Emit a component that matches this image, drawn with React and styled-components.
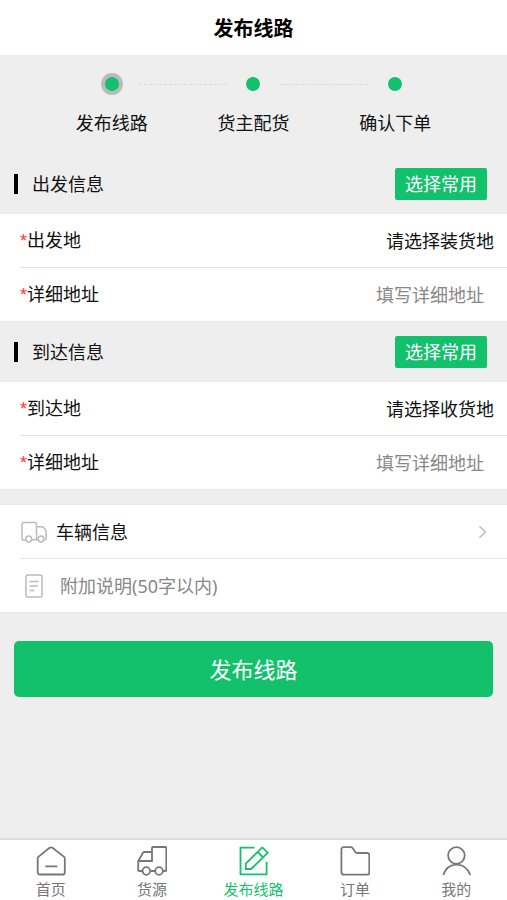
import React from "react";
import styled, { createGlobalStyle } from "styled-components";

const steps = ["发布线路", "货主配货", "确认下单"];

const sections = [
  { id: "from", title: "出发信息", place: "出发地", pick: "请选择装货地" },
  { id: "to", title: "到达信息", place: "到达地", pick: "请选择收货地" },
];

const tabs = [
  { name: "首页", Icon: HomeIcon },
  { name: "货源", Icon: GoodsIcon },
  { name: "发布线路", Icon: EditIcon, active: true },
  { name: "订单", Icon: FolderIcon },
  { name: "我的", Icon: UserIcon },
];

export default function App() {
  return (
    <PageStyled>
      <GlobalStyle />
      <Header>
        <h1>发布线路</h1>
      </Header>
      <Main>
        <Steps>
          {steps.map((label, i) => (
            <Step key={label}>
              <Dot $col={i * 2 + 1} $current={i === 0} />
              {i < steps.length - 1 && <Connector $col={i * 2 + 2} />}
              <StepLabel $col={i * 2 + 1}>{label}</StepLabel>
            </Step>
          ))}
        </Steps>

        {sections.map((s) => (
          <section key={s.id}>
            <SectionHead>
              <h2>{s.title}</h2>
              <SmallButton type="button">选择常用</SmallButton>
            </SectionHead>
            <Group>
              <Row>
                <Label id={s.id + "-place"}>
                  <span>*</span>
                  {s.place}
                </Label>
                <PickButton type="button" aria-describedby={s.id + "-place"}>
                  {s.pick}
                </PickButton>
              </Row>
              <Row>
                <Label as="label" htmlFor={s.id + "-address"}>
                  <span>*</span>
                  详细地址
                </Label>
                <TextInput id={s.id + "-address"} $right placeholder="填写详细地址" />
              </Row>
            </Group>
          </section>
        ))}

        <ExtraGroup>
          <Row>
            <CarButton type="button">
              <TruckIcon />
              车辆信息
              <ChevronIcon />
            </CarButton>
          </Row>
          <Row>
            <NoteLabel htmlFor="note">
              <NoteIcon />
            </NoteLabel>
            <TextInput
              id="note"
              aria-label="附加说明"
              maxLength={50}
              placeholder="附加说明(50字以内)"
            />
          </Row>
        </ExtraGroup>

        <SubmitButton type="button">发布线路</SubmitButton>
      </Main>
      <TabBar>
        {tabs.map(({ name, Icon, active }) => (
          <Tab key={name} href="#" $active={active}>
            <Icon />
            {name}
          </Tab>
        ))}
      </TabBar>
    </PageStyled>
  );
}

function HomeIcon() {
  return (
    <TabIcon viewBox="0 0 30 30">
      <path d="M13.6 1.8a2.4 2.4 0 0 1 2.8 0L27.8 10.6a2.4 2.4 0 0 1 1 1.9V26.5a2 2 0 0 1-2 2H3.700a2 2 0 0 1-2-2V12.500a2.400 2.400 0 0 1 1-1.900zM9.300 20.300h12" />
    </TabIcon>
  );
}

function GoodsIcon() {
  return (
    <TabIcon viewBox="0 0 30 30">
      <path d="M5.300 25H2.200a1 1 0 0 1-1-1V15L6 6.800a1.500 1.500 0 0 1 1.300-.8H15M1.200 15H15V2a1 1 0 0 1 1-1h12.300a1 1 0 0 1 1 1v22a1 1 0 0 1-1 1H26M13.300 25H18" />
      <circle cx="9.300" cy="25" r="3.800" />
      <circle cx="22" cy="25" r="3.800" />
    </TabIcon>
  );
}

function EditIcon() {
  return (
    <TabIcon viewBox="0 0 30 30">
      <path d="M15.500 1.700H1.500V28.300H27.600V15.700" />
      <path d="M6.800 17.700L23.300 1.400L28.700 6.700L12.200 23H6.800zM18.800 6L24.100 11.300" />
    </TabIcon>
  );
}

function FolderIcon() {
  return (
    <TabIcon viewBox="0 0 30 30">
      <path d="M3.400 1.200H11a2 2 0 0 1 1.600.8L15.500 6.200a2 2 0 0 0 1.600.8H27.300a2 2 0 0 1 2 2V26.600a2 2 0 0 1-2 2H3.400a2 2 0 0 1-2-2V3.200a2 2 0 0 1 2-2z" />
    </TabIcon>
  );
}

function UserIcon() {
  return (
    <TabIcon viewBox="0 0 30 30">
      <circle cx="15.400" cy="9.500" r="8.300" />
      <path d="M2.300 29C4.500 22.500 9.500 18.600 15.600 18.600S26.900 22.500 29.200 29" />
    </TabIcon>
  );
}

function TruckIcon() {
  return (
    <RowIcon width="26" height="22" viewBox="0 0 26 22">
      <path d="M4.500 19.300H2.500a1.500 1.500 0 0 1-1.500-1.500V3a1.500 1.500 0 0 1 1.500-1.500H14a1.500 1.500 0 0 1 1.500 1.500V18.500M10.800 18.700H17M15.500 5.800H20.500c2.800 0 4.700 3.200 4.700 6.500V17.500a1.500 1.500 0 0 1-1.500 1.500" />
      <circle cx="7.700" cy="18" r="2.900" />
      <circle cx="20" cy="18" r="2.900" />
    </RowIcon>
  );
}

function NoteIcon() {
  return (
    <RowIcon width="18" height="24" viewBox="0 0 18 24">
      <rect x="1" y="1" width="16" height="22" rx="1.500" />
      <path d="M4.500 7.500H13.500M4.500 12H13M4.500 16.500H9.500" />
    </RowIcon>
  );
}

function ChevronIcon() {
  return (
    <RowIcon width="9" height="14" viewBox="0 0 9 14">
      <path d="M1.500 1.500L7.500 7L1.500 12.500" />
    </RowIcon>
  );
}

const GlobalStyle = createGlobalStyle`
  * {
    box-sizing: border-box;
  }

  body {
    margin: 0;
    background: #eee;
  }

  body, button, input {
    font-family: "Noto Sans", "Noto Sans CJK SC", sans-serif;
    font-size: 18px;
    line-height: 24px;
    color: #111;
  }

  button, input {
    border: 0;
    padding: 0;
    background: none;
  }

  button {
    cursor: pointer;
  }
`;

const PageStyled = styled.div`
  min-height: 100vh;
  display: flex;
  flex-direction: column;
`;

const Header = styled.header`
  height: 55px;
  padding-top: 2px;
  display: flex;
  align-items: center;
  justify-content: center;
  background: #fff;

  h1 {
    margin: 0;
    font-size: 20px;
    color: #000;
  }
`;

const Main = styled.main`
  flex: 1;
`;

/* two grid columns per step, so that a connector can span from one dot to the next */
const Steps = styled.ol`
  display: grid;
  grid-template-columns: repeat(6, 1fr);
  grid-template-rows: 22px 24px;
  row-gap: 16px;
  align-items: center;
  margin: 0;
  padding: 18px 41px;
  list-style: none;
`;

const Step = styled.li`
  display: contents;
`;

const Dot = styled.span`
  grid-row: 1;
  grid-column: ${(p) => p.$col} / span 2;
  justify-self: center;
  width: 14px;
  height: 14px;
  border-radius: 50%;
  background: #13c16c;
  box-shadow: ${(p) => (p.$current ? "0 0 0 4px #bbb" : "none")};
`;

const Connector = styled.span`
  grid-row: 1;
  grid-column: ${(p) => p.$col} / span 2;
  margin: 0 27px;
  border-top: 1px dashed #dcdcdc;
`;

const StepLabel = styled.span`
  grid-row: 2;
  grid-column: ${(p) => p.$col} / span 2;
  text-align: center;
`;

const SectionHead = styled.div`
  height: 61px;
  padding: 0 20px 0 14px;
  display: flex;
  align-items: center;
  justify-content: space-between;

  h2 {
    margin: 0;
    padding-left: 14px;
    border-left: 4px solid #000;
    font-size: 18px;
    font-weight: 400;
    line-height: 20px;
  }
`;

const SmallButton = styled.button`
  height: 32px;
  padding: 0 10px;
  border-radius: 2px;
  background: #13c16c;
  color: #fff;
`;

const Group = styled.div`
  padding-left: 20px;
  background: #fff;
  box-shadow: 0 0 0 1px #e8e8e8;
`;

const ExtraGroup = styled(Group)`
  margin-top: 16px;
`;

const Row = styled.div`
  display: flex;
  align-items: center;
  height: 53px;

  & + & {
    height: 54px;
    border-top: 1px solid #e4e4e4;
  }
`;

const Label = styled.span`
  flex: none;

  span {
    color: #f33;
    font-family: "Liberation Sans", sans-serif;
  }
`;

const PickButton = styled.button`
  flex: 1;
  padding-right: 13px;
  text-align: right;
`;

const TextInput = styled.input`
  flex: 1;
  min-width: 0;
  height: 100%;
  padding-right: 23px;
  text-align: ${(p) => (p.$right ? "right" : "left")};
  outline: none;

  &::placeholder {
    color: #888;
    opacity: 1;
  }
`;

const CarButton = styled.button`
  flex: 1;
  height: 100%;
  padding: 0 20px 0 1px;
  display: flex;
  align-items: center;
  gap: 9px;

  svg:last-child {
    margin-left: auto;
  }
`;

const NoteLabel = styled.label`
  display: flex;
  width: 40px;
  padding-left: 5px;
`;

const RowIcon = styled.svg`
  flex: none;
  fill: none;
  stroke: #bbb;
  stroke-width: 1.5;
`;

const SubmitButton = styled.button`
  display: block;
  width: calc(100% - 28px);
  height: 56px;
  margin: 29px 14px;
  border-radius: 5px;
  background: #13c16c;
  color: #fff;
  font-size: 22px;
`;

const TabBar = styled.nav`
  position: sticky;
  bottom: 0;
  display: flex;
  height: 62px;
  border-top: 2px solid #ddd;
  background: #fff;
`;

const Tab = styled.a`
  flex: 1;
  display: flex;
  flex-direction: column;
  align-items: center;
  gap: 3px;
  padding-top: 6px;
  font-size: 15px;
  line-height: 20px;
  text-decoration: none;
  color: ${(p) => (p.$active ? "#13c16c" : "#777")};
`;

const TabIcon = styled.svg`
  width: 30px;
  height: 30px;
  fill: none;
  stroke: currentColor;
  stroke-width: 1.8;
`;
